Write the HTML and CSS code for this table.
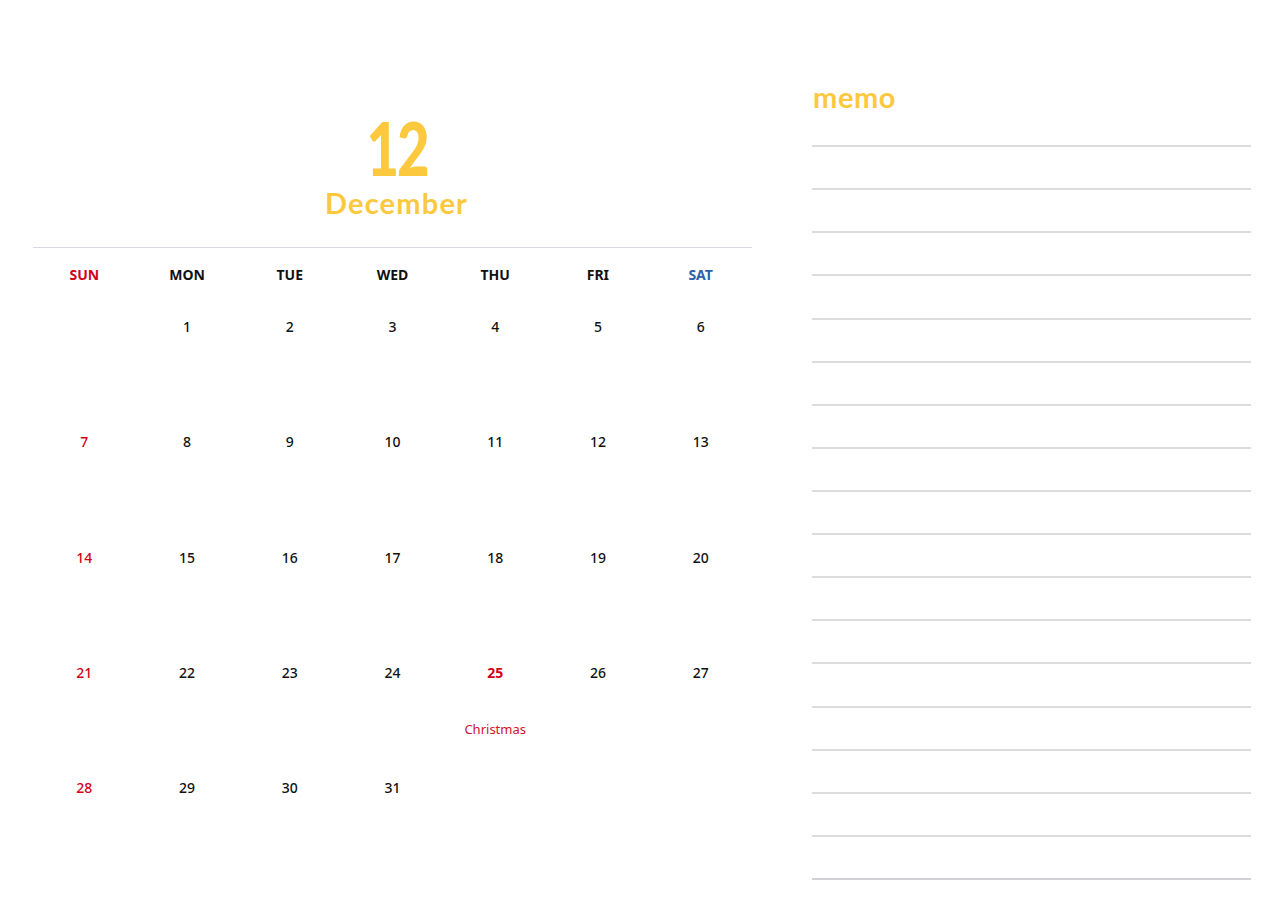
FILE: index.html
```html
<!DOCTYPE html>
<html lang="en">
<head>
<meta charset="utf-8">
<title>December Calendar</title>
<link rel="stylesheet" href="styles.css">
</head>
<body>
<div class="page">
  <section class="calendar">
    <header class="cal-head">
      <div class="month-num">12</div>
      <div class="month-name">December</div>
    </header>
    <div class="weekdays">
      <div class="wd sun">SUN</div>
      <div class="wd">MON</div>
      <div class="wd">TUE</div>
      <div class="wd">WED</div>
      <div class="wd">THU</div>
      <div class="wd">FRI</div>
      <div class="wd sat">SAT</div>
    </div>
    <div class="days">
      <div class="day"></div>
      <div class="day"><span class="n">1</span></div>
      <div class="day"><span class="n">2</span></div>
      <div class="day"><span class="n">3</span></div>
      <div class="day"><span class="n">4</span></div>
      <div class="day"><span class="n">5</span></div>
      <div class="day"><span class="n">6</span></div>

      <div class="day sun"><span class="n">7</span></div>
      <div class="day"><span class="n">8</span></div>
      <div class="day"><span class="n">9</span></div>
      <div class="day"><span class="n">10</span></div>
      <div class="day"><span class="n">11</span></div>
      <div class="day"><span class="n">12</span></div>
      <div class="day"><span class="n">13</span></div>

      <div class="day sun"><span class="n">14</span></div>
      <div class="day"><span class="n">15</span></div>
      <div class="day"><span class="n">16</span></div>
      <div class="day"><span class="n">17</span></div>
      <div class="day"><span class="n">18</span></div>
      <div class="day"><span class="n">19</span></div>
      <div class="day"><span class="n">20</span></div>

      <div class="day sun"><span class="n">21</span></div>
      <div class="day"><span class="n">22</span></div>
      <div class="day"><span class="n">23</span></div>
      <div class="day"><span class="n">24</span></div>
      <div class="day holiday"><span class="n">25</span><span class="note">Christmas</span></div>
      <div class="day"><span class="n">26</span></div>
      <div class="day"><span class="n">27</span></div>

      <div class="day sun"><span class="n">28</span></div>
      <div class="day"><span class="n">29</span></div>
      <div class="day"><span class="n">30</span></div>
      <div class="day"><span class="n">31</span></div>
      <div class="day"></div>
      <div class="day"></div>
      <div class="day"></div>
    </div>
  </section>
  <aside class="memo">
    <h2 class="memo-title">memo</h2>
    <div class="memo-lines">
      <div class="ml"></div><div class="ml"></div><div class="ml"></div>
      <div class="ml"></div><div class="ml"></div><div class="ml"></div>
      <div class="ml"></div><div class="ml"></div><div class="ml"></div>
      <div class="ml"></div><div class="ml"></div><div class="ml"></div>
      <div class="ml"></div><div class="ml"></div><div class="ml"></div>
      <div class="ml"></div><div class="ml"></div><div class="ml last"></div>
    </div>
  </aside>
</div>
</body>
</html>
```

FILE: styles.css
```css
* { box-sizing: border-box; }
html, body {
  margin: 0;
  padding: 0;
  background: #ffffff;
}
body {
  font-family: "Noto Sans", "Liberation Sans", sans-serif;
  color: #111111;
}
.page {
  display: flex;
  width: 1280px;
  height: 916px;
  overflow: hidden;
}
.calendar {
  margin-left: 33px;
  width: 719px;
  display: flex;
  flex-direction: column;
}
.cal-head {
  height: 248px;
  border-bottom: 1px solid #d9d9e2;
  display: flex;
  flex-direction: column;
  align-items: center;
  padding-top: 115px;
  padding-left: 8px;
}
.month-num {
  font-family: Lato, "Noto Sans", sans-serif;
  font-weight: 900;
  font-size: 74px;
  line-height: 66px;
  height: 66px;
  color: #fcc83e;
  letter-spacing: -3px;
  transform: scaleX(0.76);
}
.month-name {
  font-family: Lato, "Noto Sans", sans-serif;
  font-weight: 700;
  font-size: 29px;
  line-height: 34px;
  margin-top: 5px;
  color: #fcc83e;
  letter-spacing: 1.2px;
}
.weekdays {
  display: grid;
  grid-template-columns: repeat(7, 1fr);
  height: 54px;
  align-items: center;
}
.wd {
  text-align: center;
  font-weight: 700;
  font-size: 14px;
  line-height: 20px;
}
.sun, .sun .n { color: #d0021b; }
.sat { color: #2c62ac; }
.days {
  display: grid;
  grid-template-columns: repeat(7, 1fr);
  grid-auto-rows: 115.3px;
}
.day {
  display: flex;
  flex-direction: column;
  align-items: center;
  padding-top: 15px;
}
.n {
  font-size: 14px;
  font-weight: 500;
  line-height: 20px;
}
.holiday .n { color: #d0021b; font-weight: 700; }
.note {
  margin-top: 37px;
  font-size: 13px;
  line-height: 18px;
  color: #d0112b;
}
.memo {
  margin-left: 60px;
  width: 439px;
  display: flex;
  flex-direction: column;
}
.memo-title {
  margin: 0;
  padding-top: 80px;
  height: 104px;
  font-family: Lato, "Noto Sans", sans-serif;
  font-weight: 700;
  font-size: 29px;
  line-height: 34px;
  color: #fcc83e;
  letter-spacing: 0.6px;
  padding-left: 1px;
}
.memo-lines {
  display: flex;
  flex-direction: column;
}
.ml {
  height: 43.12px;
  border-bottom: 2px solid #dcdcdf;
}
.ml.last {
  border-bottom-color: #d2d2d6;
}
```
